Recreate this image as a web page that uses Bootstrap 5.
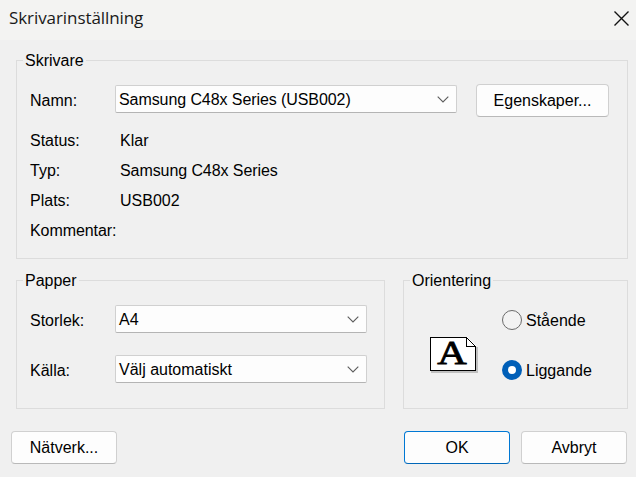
<!DOCTYPE html>
<html lang="sv">
<head>
<meta charset="utf-8">
<meta name="viewport" content="width=device-width, initial-scale=1">
<title>Skrivarinställning</title>
<link rel="stylesheet" href="https://cdn.jsdelivr.net/npm/bootstrap@5.3.0/dist/css/bootstrap.min.css">
<style>
  body { width: 636px; height: 477px; overflow: hidden; background: #f0f0f0; color: #000; font: 16px/20px "Liberation Sans", Arial, sans-serif; }
  .titlebar { height: 40px; background: #f3f3f2; padding: 0 7px 4px 9px; }
  .titlebar h1 { font: 17px/24px "Open Sans", "Noto Sans", sans-serif; letter-spacing: -.08px; color: #191919; }
  .close-btn { line-height: 0; }
  .dialog-body { padding: 10px 8px 0 16px; }
  .group { border: 1px solid #dcdcdc; }
  .group legend { float: none; width: auto; margin: 0 0 0 6px; padding: 1px 2px 0; font-size: 16px; line-height: 19px; height: 20px; }
  .group-printer { height: 209px; }
  .group-half { height: 139px; }
  .group-paper { width: 369px; }
  .group-orient { width: 225px; }
  .groups-row { padding-top: 11px; }
  .fields { padding-left: 13px; }
  .name-row { padding-top: 14px; margin-bottom: 8px; }
  .caption { width: 85px; flex: none; }
  .paper-rows .caption { padding-top: 3px; }
  .info { height: 30px; padding-top: 2px; }
  .info .caption { width: 90px; }
  .tight { letter-spacing: -.08px; }
  .combo { height: 28px; background-color: #fdfdfd; border: 1px solid #d0d0d0; border-bottom-color: #b4b4b4; border-radius: 2px; padding: 0 7px 0 3px; color: #000; text-align: left; font-size: 16px; line-height: 20px; }
  .combo span { padding-top: 1px; }
  .combo-wide { width: 342px; margin: 0 19px 3px 0; }
  .combo-paper { width: 252px; }
  .push { height: 33px; width: 106px; padding: 0; font-size: 16px; line-height: 20px; background: #fdfdfd; border: 1px solid #d0d0d0; border-bottom-color: #b9b9b9; border-radius: 4px; color: #000; }
  .push-wide { width: 133px; }
  .push-default { border-color: #0078d4; border-bottom-color: #0067b8; margin-right: 11px; }
  .paper-rows { padding-top: 15px; gap: 22px; }
  .orient-row { padding: 20px 0 0 26px; }
  .page-icon { margin: 27px 24px 0 0; }
  .radio-list { gap: 30px; }
  .radio-list label { height: 20px; }
  .radio-list span { margin-top: 2px; }
  .radio-list .form-check-input { width: 20px; height: 20px; margin: 0 4px 0 0; border: 1px solid #6b6b6b; background: #f3f3f3; box-shadow: none; }
  .radio-list .form-check-input:checked { border: 6px solid #005fb8; background: #fff; }
  .footer-row { padding: 22px 9px 0 11px; }
  svg { display: block; flex: none; }
</style>
<script src="https://cdn.jsdelivr.net/npm/bootstrap@5.3.0/dist/js/bootstrap.bundle.min.js"></script>
</head>
<body>
<header class="titlebar d-flex align-items-center justify-content-between">
  <h1 class="m-0">Skrivarinställning</h1>
  <button type="button" class="close-btn border-0 bg-transparent p-0" aria-label="Stäng">
    <svg width="15" height="15" viewBox="0 0 15 15" fill="none" stroke="#111" stroke-width="1.4"><path d="M.5 .5 14.5 14.5M14.5 .5 .5 14.5"/></svg>
  </button>
</header>

<main class="dialog-body">
  <fieldset class="group group-printer">
    <legend>Skrivare</legend>
    <div class="fields">
      <div class="name-row d-flex align-items-center">
        <span class="caption">Namn:</span>
        <button type="button" class="combo combo-wide d-flex align-items-center justify-content-between">
          <span class="tight">Samsung C48x Series (USB002)</span>
          <svg width="12" height="7" viewBox="0 0 12 7" fill="none" stroke="#5c5c5c" stroke-width="1.1"><path d="M.7 .7 6 6 11.3 .7"/></svg>
        </button>
        <button type="button" class="btn push push-wide">Egenskaper...</button>
      </div>
      <div class="info d-flex align-items-center"><span class="caption">Status:</span><span>Klar</span></div>
      <div class="info d-flex align-items-center"><span class="caption">Typ:</span><span class="tight">Samsung C48x Series</span></div>
      <div class="info d-flex align-items-center"><span class="caption">Plats:</span><span>USB002</span></div>
      <div class="info d-flex align-items-center"><span class="caption tight">Kommentar:</span></div>
    </div>
  </fieldset>

  <div class="groups-row d-flex justify-content-between">
    <fieldset class="group group-half group-paper">
      <legend>Papper</legend>
      <div class="fields paper-rows d-flex flex-column">
        <div class="d-flex align-items-center">
          <span class="caption">Storlek:</span>
          <button type="button" class="combo combo-paper d-flex align-items-center justify-content-between">
            <span>A4</span>
            <svg width="12" height="7" viewBox="0 0 12 7" fill="none" stroke="#5c5c5c" stroke-width="1.1"><path d="M.7 .7 6 6 11.3 .7"/></svg>
          </button>
        </div>
        <div class="d-flex align-items-center">
          <span class="caption">Källa:</span>
          <button type="button" class="combo combo-paper d-flex align-items-center justify-content-between">
            <span>Välj automatiskt</span>
            <svg width="12" height="7" viewBox="0 0 12 7" fill="none" stroke="#5c5c5c" stroke-width="1.1"><path d="M.7 .7 6 6 11.3 .7"/></svg>
          </button>
        </div>
      </div>
    </fieldset>

    <fieldset class="group group-half group-orient">
      <legend>Orientering</legend>
      <div class="orient-row d-flex align-items-start">
        <svg class="page-icon overflow-visible" width="48" height="36" viewBox="0 0 48 36" shape-rendering="crispEdges">
          <path d="M1 2H38L48 10V36H1Z" fill="#c0c0c0"/>
          <path d="M37 0H48V10H46Z" fill="#f0f0f0"/>
          <path d="M0 0H37L46 9V34H0Z" fill="#fff"/>
          <path d="M.5 .5H36.5L45.5 9.5V33.5H.5ZM36.5 .5V9.5H45.5" fill="none" stroke="#000"/>
          <text transform="translate(22 27) scale(1.2 1)" text-anchor="middle" font-family="Liberation Serif, Times New Roman, serif" font-size="34" stroke="#000" stroke-width=".8">A</text>
        </svg>
        <div class="radio-list d-flex flex-column">
          <label class="d-flex align-items-center"><input class="form-check-input" type="radio" name="orient"><span>Stående</span></label>
          <label class="d-flex align-items-center"><input class="form-check-input" type="radio" name="orient" checked><span>Liggande</span></label>
        </div>
      </div>
    </fieldset>
  </div>
</main>

<footer class="footer-row d-flex">
  <button type="button" class="btn push me-auto">Nätverk...</button>
  <button type="button" class="btn push push-default">OK</button>
  <button type="button" class="btn push">Avbryt</button>
</footer>
</body>
</html>
